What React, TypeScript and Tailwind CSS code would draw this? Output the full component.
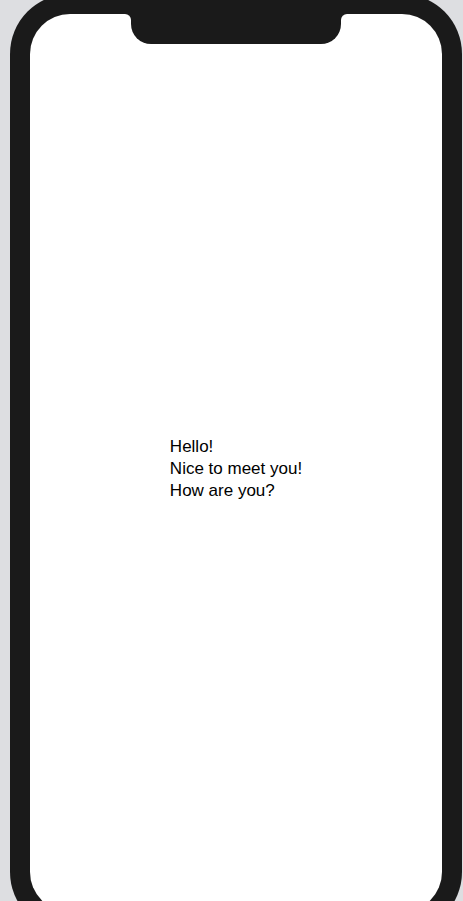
import React from "react";

export default function App() {
  return (
    <div className="min-h-screen w-full overflow-hidden bg-[#dddee1]">
      <div className="relative -mt-[6px] ml-[10px] h-[938px] w-[452px] rounded-[60px] bg-[#1a1a1a] p-[20px]">
        <div className="relative flex h-full w-full items-center justify-center rounded-[40px] bg-white">
          <div className="absolute left-1/2 top-0 h-[30px] w-[210px] -translate-x-1/2 rounded-b-[20px] bg-[#1a1a1a]">
            <div className="absolute -left-[6px] top-0 h-[6px] w-[6px] bg-[#1a1a1a]">
              <div className="h-full w-full rounded-tr-[6px] bg-white" />
            </div>
            <div className="absolute -right-[6px] top-0 h-[6px] w-[6px] bg-[#1a1a1a]">
              <div className="h-full w-full rounded-tl-[6px] bg-white" />
            </div>
          </div>
          <div className="pt-[12px] text-left text-[17px] leading-[22px] text-black" style={{ fontFamily: '"Liberation Sans", Arial, sans-serif' }}>
            <div>Hello!</div>
            <div>Nice to meet you!</div>
            <div>How are you?</div>
          </div>
        </div>
      </div>
    </div>
  );
}
